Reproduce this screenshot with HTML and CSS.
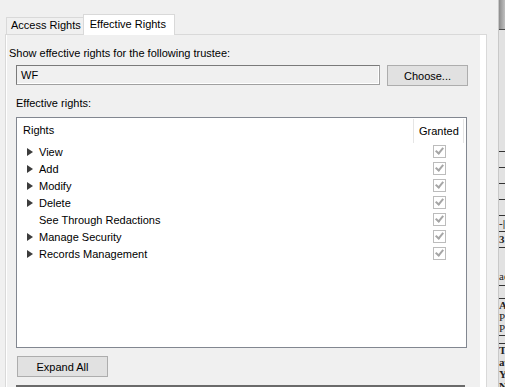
FILE: index.html
```html
<!DOCTYPE html>
<html lang="en">
<head>
<meta charset="UTF-8">
<title>Effective Rights</title>
<link rel="stylesheet" href="styles.css">
</head>
<body>
<div class="window">
  <div class="dialog">
    <div class="tabs">
      <div class="tab">Access Rights</div>
      <div class="tab active">Effective Rights</div>
    </div>
    <div class="panel">
      <div class="caption">Show effective rights for the following trustee:</div>
      <div class="trustee-row">
        <div class="textbox">WF</div>
        <button class="btn choose">Choose...</button>
      </div>
      <div class="caption indent">Effective rights:</div>
      <div class="list">
        <div class="list-head">
          <div class="col-rights">Rights</div>
          <div class="col-granted">Granted</div>
        </div>
        <div class="row"><span class="arrow"></span><span class="name">View</span><span class="check"></span></div>
        <div class="row"><span class="arrow"></span><span class="name">Add</span><span class="check"></span></div>
        <div class="row"><span class="arrow"></span><span class="name">Modify</span><span class="check"></span></div>
        <div class="row"><span class="arrow"></span><span class="name">Delete</span><span class="check"></span></div>
        <div class="row"><span class="arrow none"></span><span class="name">See Through Redactions</span><span class="check"></span></div>
        <div class="row"><span class="arrow"></span><span class="name">Manage Security</span><span class="check"></span></div>
        <div class="row"><span class="arrow"></span><span class="name">Records Management</span><span class="check"></span></div>
      </div>
      <button class="btn expand">Expand All</button>
      <div class="next-box"></div>
    </div>
  </div>

  <!-- bit of the scanned document peeking out behind the dialog -->
  <div class="strip">
    <div class="doc-top"></div>
    <div class="doc-blank"></div>
    <div class="doc-row"></div>
    <div class="doc-row"></div>
    <div class="doc-row"></div>
    <div class="doc-row"></div>
    <div class="doc-row">-|</div>
    <div class="doc-row">3</div>
    <div class="doc-space">ae</div>
    <div class="doc-row short"></div>
    <div class="doc-text bold">AT</div>
    <div class="doc-text">Pri</div>
    <div class="doc-text last">Pu</div>
    <div class="doc-row thin"></div>
    <div class="doc-text bold">TE</div>
    <div class="doc-text bold">av</div>
    <div class="doc-text bold">Yo</div>
    <div class="doc-text bold">Ne</div>
  </div>
</div>
</body>
</html>
```

FILE: styles.css
```css
body {
  margin: 0;
  background-color: #f0f0f0;
  font-family: "Liberation Sans", Arial, sans-serif;
  font-size: 11px;
  color: #000;
  overflow: hidden;
}
.window {
  display: flex;
  height: 387px;
}
.dialog {
  flex: 0 0 498px;
  padding-top: 14px;
}
.tabs {
  display: flex;
  align-items: flex-end;
  padding-left: 6px;
  height: 20px;
  position: relative;
  z-index: 1;
}
.tab {
  height: 16px;
  line-height: 15px;
  padding: 0 2px 0 4px;
  border: 1px solid #d9d9d9;
  border-bottom: none;
  background-color: #f0f0f0;
  white-space: nowrap;
}
.tab.active {
  height: 21px;
  width: 92px;
  box-sizing: border-box;
  line-height: 18px;
  margin-left: -1px;
  margin-bottom: -1px;
  padding: 0 6px;
  background-color: #fff;
}
.panel {
  margin-left: 5px;
  width: 482px;
  height: 360px;
  box-sizing: border-box;
  border: 1px solid #d9d9d9;
  border-bottom: none;
  box-shadow: inset 1px 0 #fff, inset -6px 0 #fff;
  padding-left: 1px;
}
.caption {
  margin-top: 11px;
  margin-left: 2px;
  line-height: 14px;
}
.caption.indent {
  margin-top: 10px;
  margin-left: 9px;
}
.trustee-row {
  display: flex;
  gap: 7px;
  margin-top: 5px;
  margin-left: 9px;
}
.textbox {
  width: 364px;
  height: 20px;
  box-sizing: border-box;
  border: 1px solid #7a7a7a;
  border-right-color: #a0a0a0;
  border-bottom-color: #a0a0a0;
  box-shadow: inset -1px -1px #fff;
  padding-left: 4px;
  line-height: 18px;
}
.btn {
  font: inherit;
  color: #000;
  background-color: #e1e1e1;
  border: 1px solid #adadad;
  height: 21px;
  padding: 0;
  box-sizing: border-box;
}
.choose {
  width: 81px;
}
.list {
  margin-top: 7px;
  margin-left: 9px;
  width: 451px;
  height: 231px;
  box-sizing: border-box;
  border: 1px solid #828790;
  background-color: #fff;
}
.list-head {
  display: flex;
  height: 25px;
  line-height: 24px;
}
.col-rights {
  width: 396px;
  padding-left: 6px;
  box-sizing: border-box;
}
.col-granted {
  width: 51px;
  box-sizing: border-box;
  padding-left: 5px;
  border-left: 1px solid #e5e5e5;
  border-right: 1px solid #e5e5e5;
  margin: 1px 0 0;
  height: 24px;
}
.row {
  display: flex;
  align-items: center;
  height: 17px;
}
.arrow {
  width: 0;
  height: 0;
  margin-left: 10px;
  border-left: 6px solid #3c3c3c;
  border-top: 4px solid transparent;
  border-bottom: 4px solid transparent;
}
.arrow.none {
  border-left-color: transparent;
}
.name {
  margin-left: 6px;
  flex: 1;
}
.check {
  width: 13px;
  height: 13px;
  box-sizing: border-box;
  border: 1px solid #bcbcbc;
  margin-right: 20px;
  position: relative;
}
.check::after {
  content: "";
  position: absolute;
  left: 3px;
  top: 0;
  width: 3px;
  height: 6px;
  border: solid #a6a6a6;
  border-width: 0 2px 2px 0;
  transform: rotate(40deg);
}
.expand {
  display: block;
  margin-top: 8px;
  margin-left: 10px;
  width: 91px;
}
.next-box {
  margin-top: 8px;
  margin-left: 9px;
  width: 449px;
  height: 10px;
  border-top: 2px solid #6a6a6a;
}
.strip {
  flex: 0 0 7px;
  overflow: hidden;
  background-color: #e2e2e2;
  border-left: 1px solid #c8c8c8;
  font-family: "Liberation Serif", serif;
  font-size: 11px;
  color: #222;
}
.doc-top {
  height: 29px;
  background: linear-gradient(to right, #8c8c8c, #c9c9c9);
  border-bottom: 1px solid #4a4a4a;
}
.doc-blank {
  height: 121px;
  border-bottom: 1px solid #333;
}
.doc-row {
  height: 15px;
  line-height: 15px;
  border-bottom: 1px solid #333;
  font-weight: bold;
  white-space: nowrap;
}
.doc-row.short {
  height: 12px;
}
.doc-row.thin {
  height: 7px;
}
.doc-space {
  height: 37px;
  line-height: 56px;
  border-bottom: 1px solid #333;
  white-space: nowrap;
}
.doc-text {
  height: 11px;
  line-height: 12px;
  white-space: nowrap;
}
.doc-text.bold {
  font-weight: bold;
  height: 12px;
}
.doc-text.last {
  height: 13px;
  border-bottom: 1px solid #333;
}
```
